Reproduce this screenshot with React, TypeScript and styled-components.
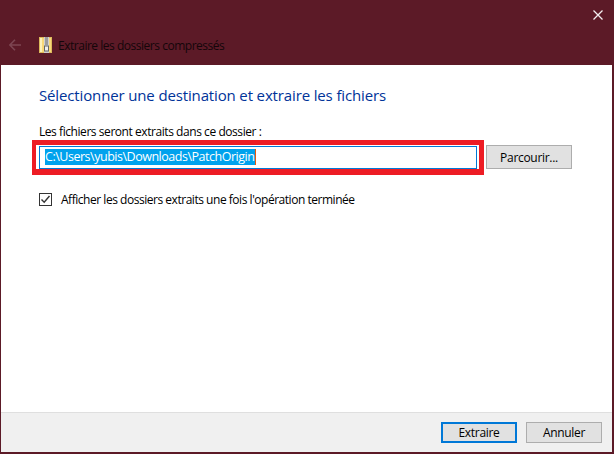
import React from "react";
import styled, { createGlobalStyle } from "styled-components";

const Global = createGlobalStyle`
  html, body {
    margin: 0;
    padding: 0;
    background: #ffffff;
  }
  body {
    font-family: "Open Sans", "Noto Sans", "Liberation Sans", sans-serif;
    font-size: 12px;
    color: #000000;
  }
`;

const Window = styled.div`
  width: 614px;
  height: 454px;
  box-sizing: border-box;
  display: flex;
  flex-direction: column;
  border: solid #5c1a27;
  border-width: 0 2px 2px 1px;
  background: #ffffff;
`;

const TitleBar = styled.div`
  height: 30px;
  flex: none;
  background: #5c1a27;
  display: flex;
  justify-content: flex-end;
  align-items: center;
  padding-right: 9px;
`;

const NavBar = styled.div`
  height: 35px;
  flex: none;
  background: #5c1a27;
  display: flex;
  align-items: center;
  padding: 0 0 5px 8px;
  box-sizing: border-box;
`;

const NavTitle = styled.span`
  margin-left: 6px;
  font-size: 12px;
  letter-spacing: -0.48px;
  color: #14060a;
  white-space: nowrap;
`;

const Body = styled.div`
  flex: 1;
  padding: 20px 0 0 38px;
  display: flex;
  flex-direction: column;
`;

const Heading = styled.h1`
  margin: 0;
  font-size: 15px;
  line-height: 21px;
  font-weight: 400;
  letter-spacing: -0.14px;
  color: #003399;
`;

const Label = styled.div`
  margin-top: 17px;
  font-size: 12px;
  line-height: 17px;
  letter-spacing: -0.44px;
`;

const PathRow = styled.div`
  margin-top: 5px;
  display: flex;
  align-items: flex-start;
  gap: 9px;
`;

const InputBox = styled.div`
  position: relative;
  width: 438px;
  height: 23px;
  margin-top: 1px;
  box-sizing: border-box;
  border: 1px solid #0078d7;
  padding: 2px 4px 3px 5px;
  display: flex;
  align-items: stretch;
`;

const Selected = styled.span`
  background: #00a2ed;
  color: #ffffff;
  font-size: 12.5px;
  line-height: 16px;
  letter-spacing: -0.48px;
  padding-right: 1px;
  border-right: 1px solid #e8590c;
  white-space: nowrap;
`;

const Annotation = styled.div`
  position: absolute;
  left: -8px;
  top: -7px;
  width: 452px;
  height: 35px;
  box-sizing: border-box;
  border-style: solid;
  border-color: #ed1c24;
  border-width: 5px 5px 6px 4px;
  pointer-events: none;
`;

const Button = styled.button<{ $primary?: boolean }>`
  width: 76px;
  height: 21px;
  box-sizing: border-box;
  padding: 0;
  background: #e1e1e1;
  border: ${(p) => (p.$primary ? "2px solid #0078d7" : "1px solid #adadad")};
  font: inherit;
  font-size: 12px;
  letter-spacing: -0.3px;
  color: #000000;
`;

const BrowseButton = styled(Button)`
  width: 86px;
  height: 24px;
`;

const CheckRow = styled.label`
  margin-top: 22px;
  display: flex;
  align-items: center;
  gap: 9px;
  font-size: 12px;
  line-height: 17px;
  letter-spacing: -0.47px;
`;

const CheckBox = styled.span`
  width: 13px;
  height: 13px;
  box-sizing: border-box;
  border: 1px solid #333333;
  background: #ffffff;
  display: flex;
  align-items: center;
  justify-content: center;
`;

const Footer = styled.div`
  height: 40px;
  flex: none;
  box-sizing: border-box;
  background: #f0f0f0;
  border-top: 1px solid #dfdfdf;
  padding: 9px 10px 0 0;
  display: flex;
  justify-content: flex-end;
  align-items: flex-start;
  gap: 9px;
`;

const BackArrow = () => (
  <svg width="12" height="12" viewBox="0 0 12 12" fill="none" stroke="#7d4652" strokeWidth="1.6">
    <path d="M0.5 6h11.5M6 0.7 0.8 6 6 11.3" />
  </svg>
);

const CloseIcon = () => (
  <svg width="10" height="10" viewBox="0 0 10 10" stroke="#f4eef0" strokeWidth="1.3">
    <path d="M0.5 0.5l9 9M9.5 0.5l-9 9" />
  </svg>
);

const ZipFolder = () => (
  <svg width="13" height="16" viewBox="0 0 13 16" style={{ marginLeft: 18 }}>
    <rect x="0.5" y="0.5" width="12" height="15" fill="#f8d878" stroke="#dcb95c" />
    <rect x="1" y="1" width="2" height="14" fill="#fdf0b8" />
    <rect x="5" y="0" width="5" height="16" fill="#d0d0d0" />
    <path d="M6 1h3M6 3h3M6 5h3M6 7h3" stroke="#666666" strokeWidth="1" />
    <rect x="5.5" y="9" width="4" height="5" fill="#eeeeee" stroke="#666666" strokeWidth="1" />
  </svg>
);

const CheckMark = () => (
  <svg width="11" height="11" viewBox="0 0 11 11" fill="none" stroke="#333333" strokeWidth="1.4">
    <path d="M1.5 5.5 4.2 8.3 9.5 2" />
  </svg>
);

export default function App() {
  return (
    <>
      <Global />
      <Window>
        <TitleBar>
          <CloseIcon />
        </TitleBar>
        <NavBar>
          <BackArrow />
          <ZipFolder />
          <NavTitle>Extraire les dossiers compressés</NavTitle>
        </NavBar>
        <Body>
          <Heading>Sélectionner une destination et extraire les fichiers</Heading>
          <Label>Les fichiers seront extraits dans ce dossier :</Label>
          <PathRow>
            <InputBox>
              <Selected>C:\Users\yubis\Downloads\PatchOrigin</Selected>
              <Annotation />
            </InputBox>
            <BrowseButton>Parcourir...</BrowseButton>
          </PathRow>
          <CheckRow>
            <CheckBox>
              <CheckMark />
            </CheckBox>
            Afficher les dossiers extraits une fois l'opération terminée
          </CheckRow>
        </Body>
        <Footer>
          <Button $primary>Extraire</Button>
          <Button>Annuler</Button>
        </Footer>
      </Window>
    </>
  );
}
